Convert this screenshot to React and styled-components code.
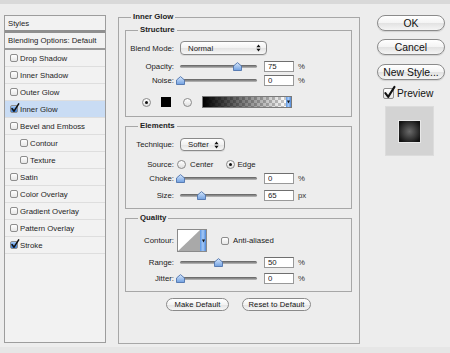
import React from "react";
import styled, { createGlobalStyle } from "styled-components";

const Global = createGlobalStyle`
  html, body { margin: 0; padding: 0; background: #ededed; }
  body { font-family: "Liberation Sans", Arial, sans-serif; }
  * { box-sizing: border-box; }
`;

const Window = styled.div`
  width: 450px;
  height: 353px;
  display: flex;
  flex-direction: column;
  background: #ededed;
  overflow: hidden;
  color: #1d1d1d;
  font-size: 7.8px;
`;

const TitleBar = styled.div`
  height: 4px;
  flex: none;
  background: #d9d9d9;
`;

const BottomBar = styled.div`
  height: 6px;
  flex: none;
  margin-top: auto;
  background: #e6e6e6;
`;

const Main = styled.div`
  display: flex;
  align-items: flex-start;
  padding: 8px 0 0 4px;
`;

/* ---------- left list ---------- */
const StylePanel = styled.div`
  width: 102px;
  height: 328px;
  margin-top: 3px;
  border: 1px solid #9d9d9d;
  background: #f2f2f2;
  display: flex;
  flex-direction: column;
`;

const PanelRow = styled.div`
  height: ${(p) => p.$h || 17}px;
  flex: none;
  display: flex;
  align-items: center;
  gap: 2px;
  padding-left: ${(p) => p.$indent}px;
  border-bottom: ${(p) => p.$sep || "1px solid #dedede"};
  background: ${(p) => (p.$active ? "#c9dcf4" : "transparent")};
  color: #1e1e1e;
  white-space: nowrap;
`;

const CheckWrap = styled.span`
  position: relative;
  width: ${(p) => p.$size}px;
  height: ${(p) => p.$size}px;
  flex: none;
  border: 1px solid #8d8d8d;
  border-radius: 2px;
  background: ${(p) =>
    p.$blue
      ? "linear-gradient(#a9cdf7, #5d98e4 55%, #3c7fd8)"
      : "linear-gradient(#ffffff, #e6e6e6)"};
`;

const CheckMark = styled.svg`
  position: absolute;
  left: 0;
  top: -3px;
  overflow: visible;
`;

function Check({ on, blue, size = 8 }) {
  return (
    <CheckWrap $blue={blue} $size={size}>
      {on && (
        <CheckMark width={size} height={size + 2} viewBox="0 0 10 12">
          <path d="M1.2 6.6 L3.8 10 L9.6 0.8" fill="none" stroke="#111" strokeWidth="1.9" strokeLinecap="round" strokeLinejoin="round" />
        </CheckMark>
      )}
    </CheckWrap>
  );
}

const items = [
  { t: "Drop Shadow" },
  { t: "Inner Shadow" },
  { t: "Outer Glow" },
  { t: "Inner Glow", on: true, active: true },
  { t: "Bevel and Emboss" },
  { t: "Contour", sub: true },
  { t: "Texture", sub: true },
  { t: "Satin" },
  { t: "Color Overlay" },
  { t: "Gradient Overlay" },
  { t: "Pattern Overlay" },
  { t: "Stroke", on: true },
];

/* ---------- middle ---------- */
const Group = styled.fieldset`
  margin: ${(p) => p.$mt || 0}px 0 0 0;
  padding: ${(p) => p.$pad};
  border: 1px solid #a7a7a7;
  min-width: 0;
  ${(p) => (p.$w ? `width: ${p.$w}px;` : "")}
  ${(p) => (p.$h ? `height: ${p.$h}px;` : "")}
`;

const Legend = styled.legend`
  padding: 0 2px;
  margin-left: ${(p) => p.$ml}px;
  font-weight: bold;
  font-size: 7.8px;
  line-height: 10px;
  color: #222;
`;

const OuterGroup = styled(Group)`
  margin-left: 12px;
  display: flex;
  flex-direction: column;
`;

const Row = styled.div`
  display: flex;
  align-items: center;
  height: ${(p) => p.$h || 14}px;
  margin-top: ${(p) => p.$mt || 0}px;
  gap: ${(p) => (p.$gap === undefined ? 6 : p.$gap)}px;
  ${(p) => (p.$pl ? `padding-left: ${p.$pl}px;` : "")}
`;

const Label = styled.span`
  width: 48px;
  flex: none;
  text-align: right;
  white-space: nowrap;
  color: #222;
`;

const SliderBox = styled.div`
  position: relative;
  width: 77px;
  height: 9px;
  flex: none;
  display: flex;
  align-items: center;
`;

const Track = styled.div`
  width: 100%;
  height: 3px;
  border-radius: 2px;
  background: linear-gradient(#5e5e5e, #939393 60%, #c0c0c0);
`;

const Thumb = styled.svg`
  position: absolute;
  top: 0;
`;

function Slider({ value }) {
  return (
    <SliderBox>
      <Track />
      <Thumb width="9" height="9" viewBox="0 0 9 9" style={{ left: `${value * 77 - 4.5}px` }}>
        <defs>
          <linearGradient id="tg" x1="0" y1="0" x2="0" y2="1">
            <stop offset="0" stopColor="#d8e8fc" />
            <stop offset="1" stopColor="#6f9fe0" />
          </linearGradient>
        </defs>
        <path d="M0.5 4 L4.5 0.6 L8.5 4 L8.5 8.5 L0.5 8.5 Z" fill="url(#tg)" stroke="#4f74ad" strokeWidth="0.9" />
      </Thumb>
    </SliderBox>
  );
}

const NumField = styled.input`
  width: 30px;
  height: 11px;
  flex: none;
  margin-left: 1px;
  border: 1px solid #999;
  border-top-color: #6f6f6f;
  background: #fff;
  padding: 0 0 0 3px;
  font-family: inherit;
  font-size: 7.8px;
  line-height: 9px;
  color: #222;
  outline: none;
`;

const Unit = styled.span`
  margin-left: -2px;
  color: #333;
`;

const PopUp = styled.div`
  width: ${(p) => p.$w}px;
  height: ${(p) => p.$h || 14}px;
  flex: none;
  border: 1px solid #8a8a8a;
  border-radius: 4px;
  background: linear-gradient(#ffffff, #f2f2f2 50%, #e4e4e4 52%, #f7f7f7);
  display: flex;
  align-items: center;
  justify-content: space-between;
  padding: 0 5px 0 7px;
  color: #1b1b1b;
  box-shadow: 0 1px 0 rgba(0, 0, 0, 0.08);
`;

function UpDown() {
  return (
    <svg width="5" height="8" viewBox="0 0 5 8">
      <path d="M2.5 0.5 L4.6 3.2 L0.4 3.2 Z M2.5 7.5 L4.6 4.8 L0.4 4.8 Z" fill="#111" />
    </svg>
  );
}

const Radio = styled.span`
  width: 9px;
  height: 9px;
  flex: none;
  margin-left: ${(p) => p.$ml || 0}px;
  border: 1px solid #8a8a8a;
  border-radius: 50%;
  background: linear-gradient(#ffffff, #e0e0e0);
  display: flex;
  align-items: center;
  justify-content: center;
`;

const Dot = styled.span`
  width: 3px;
  height: 3px;
  border-radius: 50%;
  background: #111;
`;

const Swatch = styled.span`
  width: 10px;
  height: 10px;
  flex: none;
  background: #000;
  margin-left: ${(p) => p.$ml}px;
`;

const GradientPicker = styled.div`
  width: 90px;
  height: 12px;
  flex: none;
  margin-left: ${(p) => p.$ml}px;
  border: 1px solid #7a7a7a;
  display: flex;
`;

const GradientFill = styled.div`
  flex: 1;
  background: linear-gradient(to right, #000, rgba(0, 0, 0, 0.55) 45%, rgba(0, 0, 0, 0)),
    repeating-conic-gradient(#c9c9c9 0 25%, #ffffff 0 50%) 0 0 / 6px 6px;
`;

const BlueArrow = styled.div`
  width: ${(p) => p.$w}px;
  flex: none;
  background: linear-gradient(to right, #5d98e4, #a6c9f6, #4d88d9);
  display: flex;
  align-items: center;
  justify-content: center;
`;

function DownTri() {
  return (
    <svg width="3" height="4" viewBox="0 0 3 4">
      <path d="M0 0.5 L3 0.5 L1.5 3.5 Z" fill="#111" />
    </svg>
  );
}

const TextBit = styled.span`
  white-space: nowrap;
  color: #222;
  margin-left: ${(p) => p.$ml || 0}px;
`;

const ContourBox = styled.div`
  width: 30px;
  height: 23px;
  flex: none;
  border: 1px solid #8a8a8a;
  display: flex;
  background: #fff;
`;

const ContourGraph = styled.svg`
  flex: 1;
  height: 100%;
`;

const AntiAlias = styled.span`
  display: flex;
  align-items: center;
  gap: 4px;
  margin-left: 11px;
`;

const SmallButtons = styled.div`
  display: flex;
  justify-content: center;
  gap: 13px;
  margin-top: 6px;
`;

const SmallButton = styled.div`
  width: ${(p) => p.$w}px;
  height: 13px;
  border: 1px solid #8a8a8a;
  border-radius: 7px;
  background: linear-gradient(#ffffff, #f3f3f3 50%, #e3e3e3 52%, #f6f6f6);
  display: flex;
  align-items: center;
  justify-content: center;
  color: #111;
  font-size: 7.6px;
  letter-spacing: 0.1px;
`;

/* ---------- right ---------- */
const Side = styled.div`
  width: 68px;
  margin: 3px 0 0 17px;
  display: flex;
  flex-direction: column;
`;

const PillButton = styled.div`
  height: 16px;
  margin-top: ${(p) => p.$mt || 0}px;
  border: 1px solid #8b8b8b;
  border-radius: 8px;
  background: linear-gradient(#ffffff, #f4f4f4 48%, #e2e2e2 52%, #f5f5f5);
  display: flex;
  align-items: center;
  justify-content: center;
  font-size: 10.4px;
  color: #111;
  box-shadow: 0 1px 1px rgba(0, 0, 0, 0.12);
`;

const PreviewRow = styled.div`
  display: flex;
  align-items: center;
  gap: 3px;
  margin: 8px 0 0 6px;
  height: 11px;
  font-size: 10.2px;
  color: #111;
`;

const PreviewBox = styled.div`
  width: 49px;
  height: 50px;
  margin: 7px 0 0 8px;
  background: #d3d3d3;
  border: 1px solid #dcdcdc;
  display: flex;
  align-items: center;
  justify-content: center;
`;

const PreviewSquare = styled.div`
  width: 23px;
  height: 23px;
  border: 1px solid #e8e8e8;
  background: radial-gradient(circle at 50% 50%, #6a6a6a 0%, #3c3c3c 45%, #121212 85%);
`;

export default function App() {
  return (
    <Window>
      <Global />
      <TitleBar />
      <Main>
        <StylePanel>
          <PanelRow $h={17} $indent={3} $sep="3px solid #8f8f8f">Styles</PanelRow>
          <PanelRow $h={17} $indent={3} $sep="2px solid #9a9a9a">Blending Options: Default</PanelRow>
          {items.map((it) => (
            <PanelRow key={it.t} $indent={it.sub ? 15 : 5} $active={it.active}>
              <Check on={it.on} blue={it.on} />
              {it.t}
            </PanelRow>
          ))}
        </StylePanel>

        <OuterGroup $w={242} $h={332} $pad="0 7px 0 6px">
          <Legend $ml={6}>Inner Glow</Legend>

          <Group $mt={3} $pad="0 0 8px 0">
            <Legend $ml={12}>Structure</Legend>
            <Row $mt={6} $h={14}>
              <Label>Blend Mode:</Label>
              <PopUp $w={87}>
                Normal
                <UpDown />
              </PopUp>
            </Row>
            <Row $mt={4}>
              <Label>Opacity:</Label>
              <Slider value={0.75} />
              <NumField readOnly value="75" />
              <Unit>%</Unit>
            </Row>
            <Row $h={15}>
              <Label>Noise:</Label>
              <Slider value={0} />
              <NumField readOnly value="0" />
              <Unit>%</Unit>
            </Row>
            <Row $mt={8} $h={12} $gap={0} $pl={16}>
              <Radio>
                <Dot />
              </Radio>
              <Swatch $ml={10} />
              <Radio $ml={12} />
              <GradientPicker $ml={10}>
                <GradientFill />
                <BlueArrow $w={5}>
                  <DownTri />
                </BlueArrow>
              </GradientPicker>
            </Row>
          </Group>

          <Group $mt={4} $pad="0 0 6px 0">
            <Legend $ml={12}>Elements</Legend>
            <Row $mt={7} $h={13}>
              <Label>Technique:</Label>
              <PopUp $w={45} $h={13}>
                Softer
                <UpDown />
              </PopUp>
            </Row>
            <Row $mt={6} $gap={3}>
              <Label>Source:</Label>
              <Radio />
              <TextBit $ml={1}>Center</TextBit>
              <Radio $ml={10}>
                <Dot />
              </Radio>
              <TextBit $ml={-1}>Edge</TextBit>
            </Row>
            <Row>
              <Label>Choke:</Label>
              <Slider value={0} />
              <NumField readOnly value="0" />
              <Unit>%</Unit>
            </Row>
            <Row $mt={3}>
              <Label>Size:</Label>
              <Slider value={0.28} />
              <NumField readOnly value="65" />
              <Unit>px</Unit>
            </Row>
          </Group>

          <Group $mt={4} $pad="0 0 6px 0">
            <Legend $ml={12}>Quality</Legend>
            <Row $mt={6} $h={23} $gap={3}>
              <Label>Contour:</Label>
              <ContourBox>
                <ContourGraph viewBox="0 0 23 21" preserveAspectRatio="none">
                  <path d="M0 21 L23 0 L23 21 Z" fill="#a9a9a9" />
                </ContourGraph>
                <BlueArrow $w={6}>
                  <DownTri />
                </BlueArrow>
              </ContourBox>
              <AntiAlias>
                <Check />
                <TextBit>Anti-aliased</TextBit>
              </AntiAlias>
            </Row>
            <Row $mt={3}>
              <Label>Range:</Label>
              <Slider value={0.5} />
              <NumField readOnly value="50" />
              <Unit>%</Unit>
            </Row>
            <Row $mt={2}>
              <Label>Jitter:</Label>
              <Slider value={0} />
              <NumField readOnly value="0" />
              <Unit>%</Unit>
            </Row>
          </Group>

          <SmallButtons>
            <SmallButton $w={63}>Make Default</SmallButton>
            <SmallButton $w={69}>Reset to Default</SmallButton>
          </SmallButtons>
        </OuterGroup>

        <Side>
          <PillButton>OK</PillButton>
          <PillButton $mt={8}>Cancel</PillButton>
          <PillButton $mt={9}>New Style...</PillButton>
          <PreviewRow>
            <Check on size={11} />
            Preview
          </PreviewRow>
          <PreviewBox>
            <PreviewSquare />
          </PreviewBox>
        </Side>
      </Main>
      <BottomBar />
    </Window>
  );
}
